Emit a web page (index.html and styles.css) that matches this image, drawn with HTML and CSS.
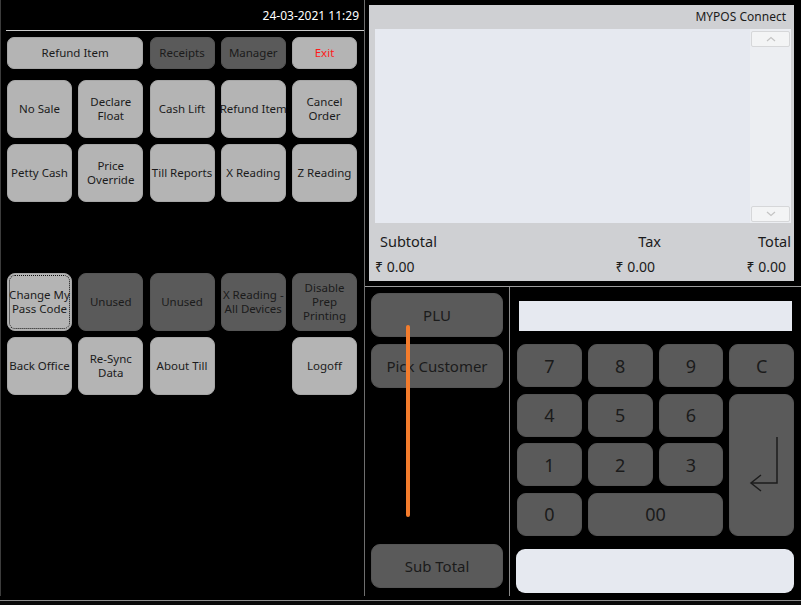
FILE: index.html
```html
<!DOCTYPE html>
<html>
<head>
<meta charset="utf-8">
<title>MYPOS Connect</title>
<link rel="stylesheet" href="styles.css">
</head>
<body>
<div class="screen">
  <aside class="left">
    <div class="clock">24-03-2021 11:29</div>
    <div class="toprow">
      <button class="btn light span2">Refund Item</button>
      <button class="btn dark">Receipts</button>
      <button class="btn dark">Manager</button>
      <button class="btn light exit">Exit</button>
    </div>
    <div class="grid g1">
      <button class="btn light">No Sale</button>
      <button class="btn light">Declare<br>Float</button>
      <button class="btn light">Cash Lift</button>
      <button class="btn light">Refund Item</button>
      <button class="btn light">Cancel<br>Order</button>
      <button class="btn light">Petty Cash</button>
      <button class="btn light">Price<br>Override</button>
      <button class="btn light">Till Reports</button>
      <button class="btn light">X Reading</button>
      <button class="btn light">Z Reading</button>
    </div>
    <div class="grid g2">
      <button class="btn light focus">Change My<br>Pass Code</button>
      <button class="btn dark">Unused</button>
      <button class="btn dark">Unused</button>
      <button class="btn dark">X Reading -<br>All Devices</button>
      <button class="btn dark">Disable<br>Prep<br>Printing</button>
      <button class="btn light">Back Office</button>
      <button class="btn light">Re-Sync<br>Data</button>
      <button class="btn light">About Till</button>
      <div class="slot"></div>
      <button class="btn light">Logoff</button>
    </div>
  </aside>
  <main class="right">
    <section class="receipt">
      <div class="title">MYPOS Connect</div>
      <div class="list">
        <div class="items"></div>
        <div class="scroll">
          <div class="sbtn"><svg width="12" height="6" viewBox="0 0 12 6"><polyline points="2,5 6,1.5 10,5" fill="none" stroke="#c4c4c4" stroke-width="1.2"/></svg></div>
          <div class="track"></div>
          <div class="sbtn"><svg width="12" height="6" viewBox="0 0 12 6"><polyline points="2,1 6,4.5 10,1" fill="none" stroke="#c4c4c4" stroke-width="1.2"/></svg></div>
        </div>
      </div>
      <div class="totals">
        <span class="lab c1">Subtotal</span>
        <span class="lab c2">Tax</span>
        <span class="lab c3">Total</span>
        <span class="val c1">₹ 0.00</span>
        <span class="val c2">₹ 0.00</span>
        <span class="val c3">₹ 0.00</span>
      </div>
    </section>
    <div class="lower">
      <div class="actions">
        <button class="btn dark act">PLU</button>
        <button class="btn dark act">Pick Customer</button>
        <div class="spacer"></div>
        <button class="btn dark act">Sub Total</button>
        <div class="stroke"></div>
      </div>
      <div class="keypad">
        <div class="display"></div>
        <div class="keys">
          <button class="btn dark key">7</button>
          <button class="btn dark key">8</button>
          <button class="btn dark key">9</button>
          <button class="btn dark key">C</button>
          <button class="btn dark key">4</button>
          <button class="btn dark key">5</button>
          <button class="btn dark key">6</button>
          <button class="btn dark key enter"><svg width="32" height="58" viewBox="0 0 32 58"><polyline points="29,1 29,47 3,47" fill="none" stroke="#1c1c1c" stroke-width="1.5"/><polyline points="13,39 3,47 13,55" fill="none" stroke="#1c1c1c" stroke-width="1.5"/></svg></button>
          <button class="btn dark key">1</button>
          <button class="btn dark key">2</button>
          <button class="btn dark key">3</button>
          <button class="btn dark key">0</button>
          <button class="btn dark key zero2">00</button>
        </div>
        <div class="entry"></div>
      </div>
    </div>
  </main>
</div>
<div class="taskbar"></div>
</body>
</html>
```

FILE: styles.css
```css
* { box-sizing: border-box; }
html, body { margin: 0; padding: 0; background: #000; }
body {
  width: 801px;
  height: 605px;
  overflow: hidden;
  font-family: "Noto Sans", "Open Sans", sans-serif;
  color: #1b1b1b;
}
.screen {
  display: flex;
  height: 596px;
  border-left: 1px solid #3c3c3c;
}
.taskbar {
  margin-top: 4px;
  height: 5px;
  border-top: 1px solid #8c8c8c;
  background: #0a0a0a;
}

/* ---------- left panel ---------- */
.left {
  width: 364px;
  flex: none;
  border-right: 1px solid #6e6e6e;
  display: flex;
  flex-direction: column;
}
.clock {
  margin-left: 5px;
  height: 31px;
  padding: 8px 5px 0 0;
  border-bottom: 1px solid #c9c9c9;
  color: #fff;
  font-size: 12px;
  line-height: 16px;
  text-align: right;
}
.btn {
  font-family: inherit;
  border: 1px solid transparent;
  border-radius: 8px;
  padding: 0;
  margin: 0;
  font-size: 11.5px;
  line-height: 14px;
  color: #1b1b1b;
  white-space: nowrap;
  display: flex;
  align-items: center;
  justify-content: center;
  text-align: center;
}
.light { background: #b4b4b4; border-color: #a6a6a6; }
.dark { background: #5a5a5a; border-color: #555; }
.exit { color: #ff1a1a; }
.focus { outline: 1px dotted #111; outline-offset: -3px; }

.toprow {
  display: grid;
  grid-template-columns: repeat(5, 65px);
  column-gap: 6.25px;
  margin: 6px 0 0 6px;
  height: 32px;
}
.toprow .btn { border-radius: 7px; }
.span2 { grid-column: span 2; }

.grid {
  display: grid;
  grid-template-columns: repeat(5, 65px);
  grid-auto-rows: 58px;
  column-gap: 6.25px;
  row-gap: 6px;
  margin-left: 6px;
}
.g1 { margin-top: 11px; }
.g2 { margin-top: 71px; }

/* ---------- right side ---------- */
.right {
  flex: 1;
  display: flex;
  flex-direction: column;
}
.receipt {
  margin: 5px 7px 0 4px;
  height: 276px;
  background: #cfd0d3;
  display: flex;
  flex-direction: column;
}
.title {
  height: 24px;
  padding: 4px 8px 0 0;
  text-align: right;
  font-size: 12px;
  line-height: 16px;
}
.list {
  display: flex;
  height: 194px;
  margin: 0 3px 0 6px;
  background: #e6e9f0;
}
.items { flex: 1; }
.scroll {
  width: 41px;
  display: flex;
  flex-direction: column;
  padding: 2px 1px 1px 1px;
  background: #eceef2;
}
.sbtn {
  height: 16px;
  background: #f3f4f5;
  border: 1px solid #d6d7d9;
  border-radius: 2px;
  display: flex;
  align-items: center;
  justify-content: center;
}
.track { flex: 1; }
.totals {
  display: grid;
  grid-template-columns: 160px 132px 130px;
  grid-template-rows: 22px 22px;
  margin-top: 7px;
}
.lab { font-size: 14.5px; line-height: 22px; }
.val { font-size: 14px; line-height: 22px; margin-top: 4px; }
.lab.c1 { padding-left: 11px; }
.lab.c2 { text-align: right; }
.lab.c3 { text-align: right; }
.val.c1 { padding-left: 6px; }
.val.c2 { text-align: right; padding-right: 6px; }
.val.c3 { text-align: right; padding-right: 5px; }

.lower {
  margin-top: 5px;
  border-top: 1px solid #9c9c9c;
  flex: 1;
  display: flex;
}
.actions {
  position: relative;
  width: 145px;
  flex: none;
  border-right: 1px solid #8a8a8a;
  padding: 6px 6px 8px 6px;
  display: flex;
  flex-direction: column;
  gap: 7px;
}
.act {
  height: 44px;
  font-size: 15px;
  border-radius: 9px;
}
.spacer { flex: 1; }
.stroke {
  position: absolute;
  left: 41px;
  top: 38px;
  width: 4px;
  height: 192px;
  border-radius: 2px;
  background: #f47c2c;
}
.keypad {
  flex: 1;
  padding: 14px 7px 0 7px;
  display: flex;
  flex-direction: column;
}
.display {
  height: 30px;
  margin: 0 2px;
  background: #e6e9f0;
}
.keys {
  margin-top: 13px;
  display: grid;
  grid-template-columns: repeat(4, 1fr);
  grid-template-rows: repeat(4, 43px);
  column-gap: 6px;
  row-gap: 6.5px;
}
.key {
  font-size: 18px;
  border-radius: 9px;
}
.enter {
  grid-column: 4;
  grid-row: 2 / span 3;
  padding: 0 0 0 4px;
}
.zero2 { grid-column: span 2; }
.entry {
  margin: 13px 0 0 -1px;
  height: 44px;
  border-radius: 9px;
  background: #e6e9f0;
}
```
